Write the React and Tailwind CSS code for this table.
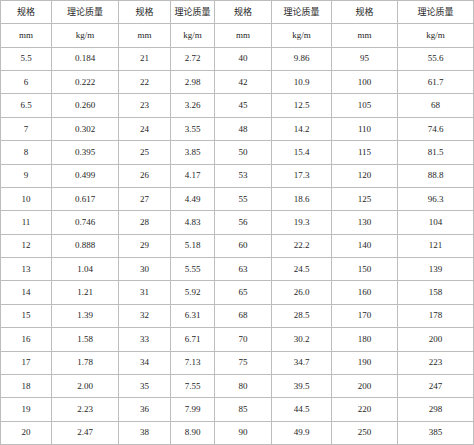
import React from "react";

const cols = [
  ["5.5","6","6.5","7","8","9","10","11","12","13","14","15","16","17","18","19","20"],
  ["0.184","0.222","0.260","0.302","0.395","0.499","0.617","0.746","0.888","1.04","1.21","1.39","1.58","1.78","2.00","2.23","2.47"],
  ["21","22","23","24","25","26","27","28","29","30","31","32","33","34","35","36","38"],
  ["2.72","2.98","3.26","3.55","3.85","4.17","4.49","4.83","5.18","5.55","5.92","6.31","6.71","7.13","7.55","7.99","8.90"],
  ["40","42","45","48","50","53","55","56","60","63","65","68","70","75","80","85","90"],
  ["9.86","10.9","12.5","14.2","15.4","17.3","18.6","19.3","22.2","24.5","26.0","28.5","30.2","34.7","39.5","44.5","49.9"],
  ["95","100","105","110","115","120","125","130","140","150","160","170","180","190","200","220","250"],
  ["55.6","61.7","68","74.6","81.5","88.8","96.3","104","121","139","158","178","200","223","247","298","385"],
];

const header1 = ["规格","理论质量","规格","理论质量","规格","理论质量","规格","理论质量"];
const header2 = ["mm","kg/m","mm","kg/m","mm","kg/m","mm","kg/m"];

export default function App() {
  const rows = [header1, header2];
  for (let r = 0; r < 17; r++) rows.push(cols.map((c) => c[r]));
  return (
    <div className="w-[474px] h-[445px] bg-white">
      <div
        className="grid h-[445px] w-[474px] grid-cols-[51px_67px_52px_44px_57px_60px_66px_76px] grid-rows-[repeat(19,1fr)] border-l border-t border-[#bdbdbd] text-[#1e1e1e] text-[9px]"
        style={{ fontFamily: '"Liberation Serif", "Noto Sans CJK SC", serif' }}
      >
        {rows.map((row, ri) =>
          row.map((v, ci) => (
            <div
              key={ri + "-" + ci}
              className="flex items-center justify-center border-r border-b border-[#bdbdbd] leading-none"
            >
              {v}
            </div>
          ))
        )}
      </div>
    </div>
  );
}
